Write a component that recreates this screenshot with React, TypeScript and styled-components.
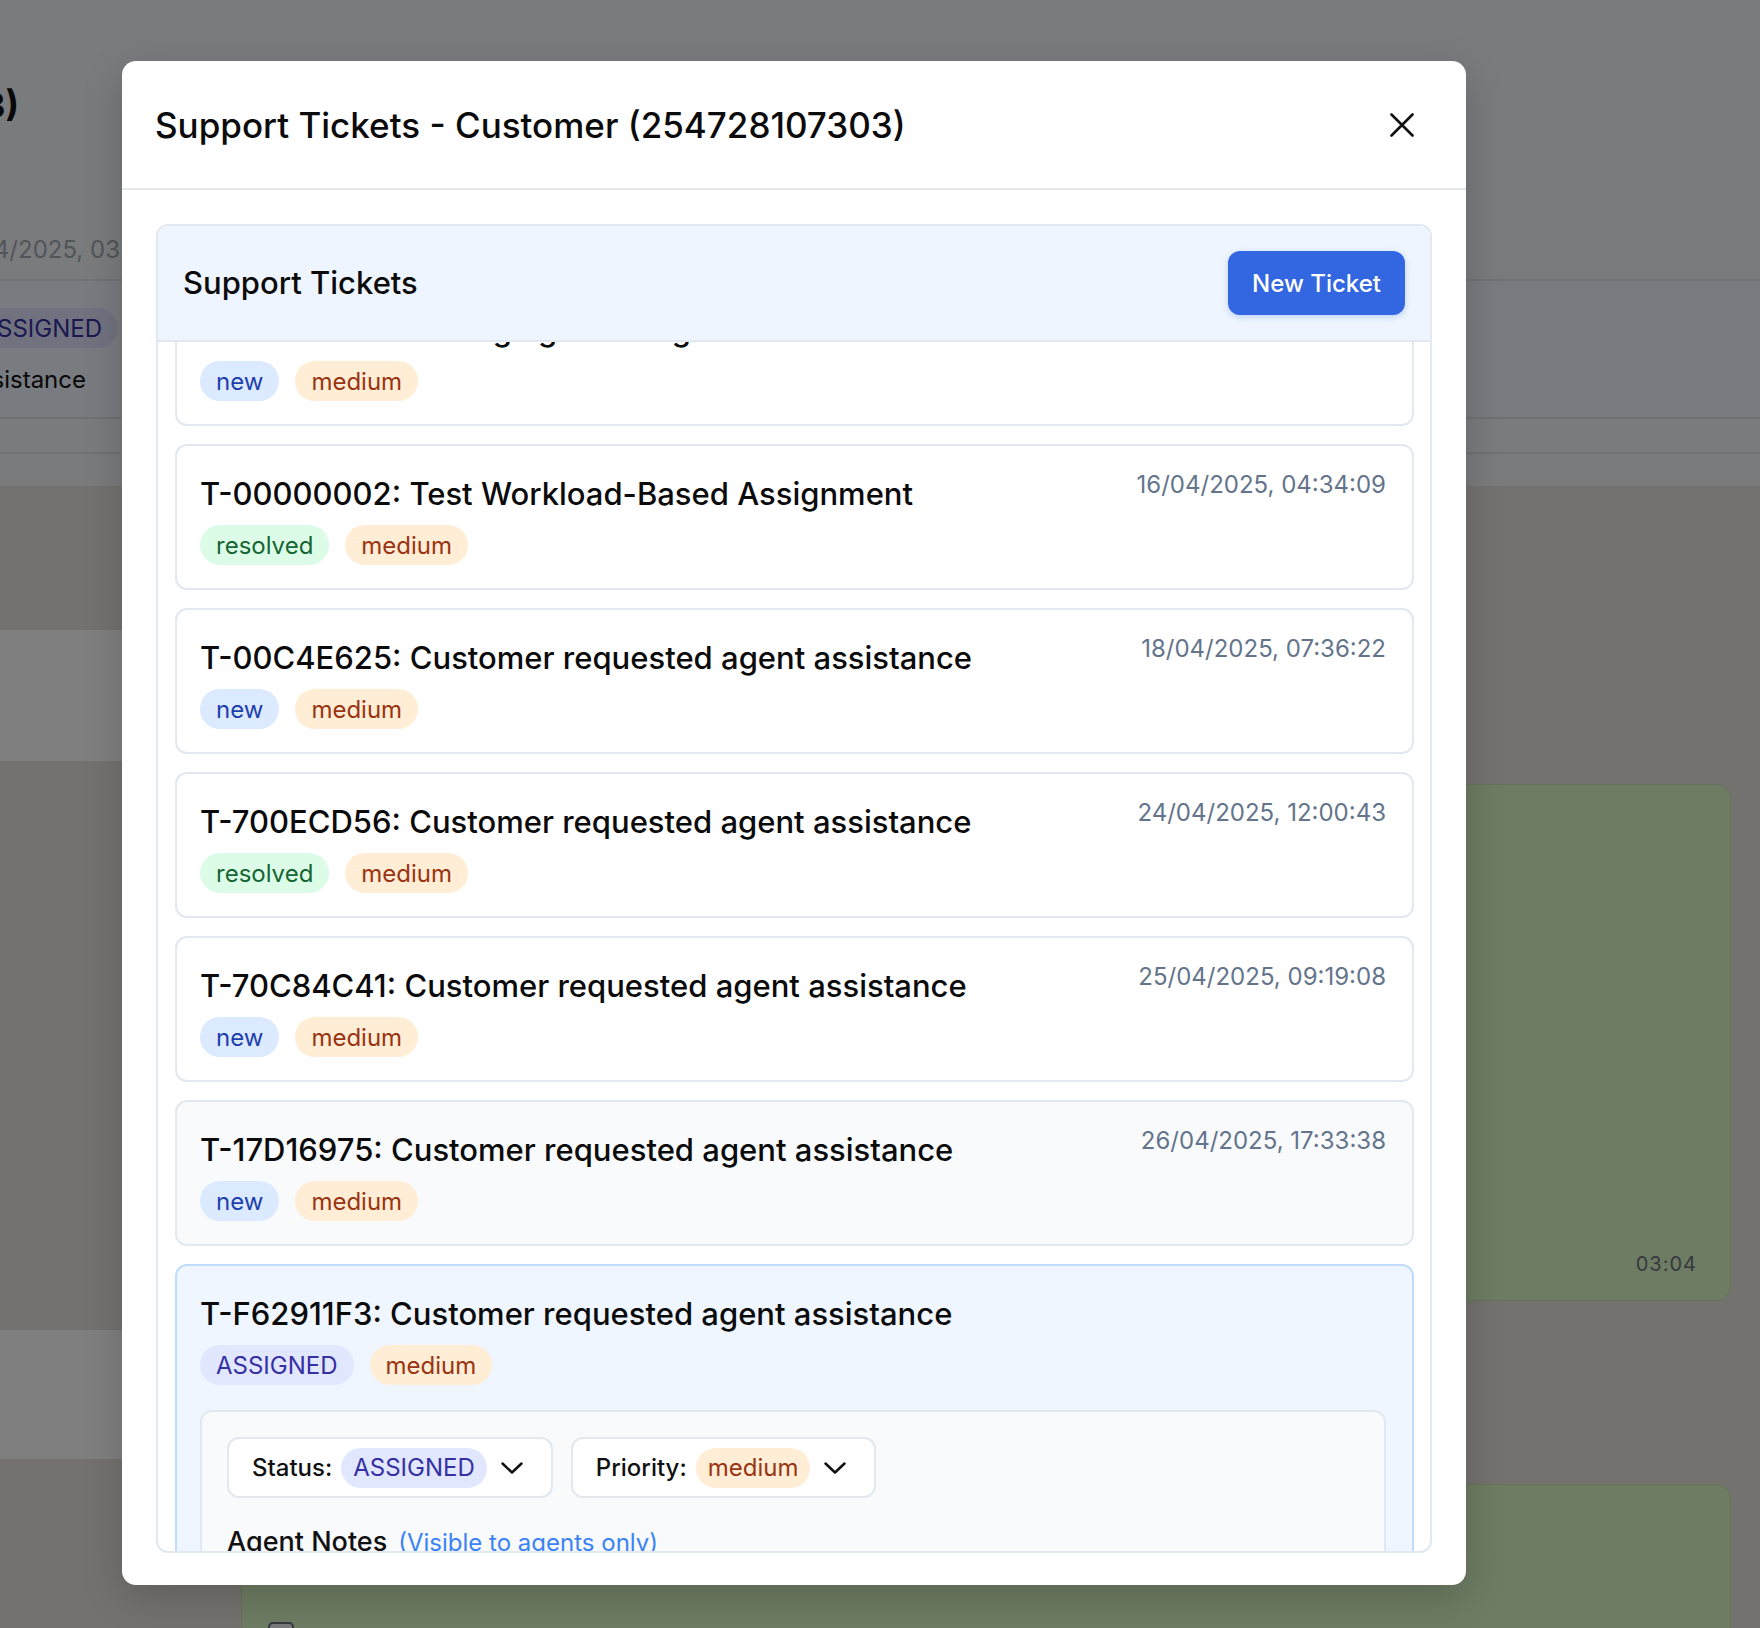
import { useLayoutEffect, useRef } from "react";
import styled, { createGlobalStyle } from "styled-components";

type Tone = "new" | "resolved" | "assigned" | "medium";
type Look = "plain" | "hover" | "open";

type Ticket = {
  id: string;
  title: string;
  date?: string;
  status: Tone;
  statusLabel: string;
  look: Look;
};

const tickets: Ticket[] = [
  {
    id: "T-00000001",
    title: "Testing agent assignment on ticket creation",
    date: "15/04/2025, 10:12:45",
    status: "new",
    statusLabel: "new",
    look: "plain",
  },
  {
    id: "T-00000002",
    title: "Test Workload-Based Assignment",
    date: "16/04/2025, 04:34:09",
    status: "resolved",
    statusLabel: "resolved",
    look: "plain",
  },
  {
    id: "T-00C4E625",
    title: "Customer requested agent assistance",
    date: "18/04/2025, 07:36:22",
    status: "new",
    statusLabel: "new",
    look: "plain",
  },
  {
    id: "T-700ECD56",
    title: "Customer requested agent assistance",
    date: "24/04/2025, 12:00:43",
    status: "resolved",
    statusLabel: "resolved",
    look: "plain",
  },
  {
    id: "T-70C84C41",
    title: "Customer requested agent assistance",
    date: "25/04/2025, 09:19:08",
    status: "new",
    statusLabel: "new",
    look: "plain",
  },
  {
    id: "T-17D16975",
    title: "Customer requested agent assistance",
    date: "26/04/2025, 17:33:38",
    status: "new",
    statusLabel: "new",
    look: "hover",
  },
  {
    id: "T-F62911F3",
    title: "Customer requested agent assistance",
    status: "assigned",
    statusLabel: "ASSIGNED",
    look: "open",
  },
];

const tones: Record<Tone, { bg: string; fg: string }> = {
  new: { bg: "#dbeafe", fg: "#1e40af" },
  resolved: { bg: "#dcfce7", fg: "#166534" },
  assigned: { bg: "#e0e7ff", fg: "#3730a3" },
  medium: { bg: "#ffedd5", fg: "#9a3412" },
};

const looks: Record<Look, { bg: string; border: string }> = {
  plain: { bg: "#ffffff", border: "#e2e8f0" },
  hover: { bg: "#f8fafc", border: "#e2e8f0" },
  open: { bg: "#eff6ff", border: "#bfdbfe" },
};

const GlobalStyle = createGlobalStyle`
  html, body {
    margin: 0;
    padding: 0;
  }
  body {
    font-family: Inter, "Noto Sans", "Liberation Sans", sans-serif;
    color: #111827;
    -webkit-font-smoothing: antialiased;
  }
  * {
    box-sizing: border-box;
  }
`;

/* ---------- page behind the modal ---------- */

const Page = styled.div`
  position: relative;
  width: 1760px;
  height: 1628px;
  overflow: hidden;
  background: #f4f6fa;
  display: flex;
  flex-direction: column;
`;

const ChatHeader = styled.header`
  height: 281px;
  flex-shrink: 0;
  padding-top: 83px;
  border-bottom: 2px solid #dde3ea;
  display: flex;
  flex-direction: column;
  gap: 107px;
`;

const ClipLine = styled.div<{ $end: number }>`
  width: ${(p) => p.$end}px;
  display: flex;
  justify-content: flex-end;
  align-items: center;
  overflow: hidden;
  white-space: nowrap;
`;

const PageTitle = styled.h1`
  margin: 0;
  font-size: 36px;
  line-height: 44px;
  font-weight: 700;
  color: #111;
`;

const PageDate = styled.span`
  font-size: 24px;
  line-height: 32px;
  color: #a3aab5;
`;

const TicketStrip = styled.div`
  height: 138px;
  flex-shrink: 0;
  background: #f0f6ff;
  border-bottom: 2px solid #dde3ea;
  padding-top: 27px;
  display: flex;
  flex-direction: column;
  gap: 16px;
`;

const StripText = styled.span`
  font-size: 24px;
  line-height: 32px;
  color: #111;
`;

const ThinStrip = styled.div`
  height: 35px;
  flex-shrink: 0;
  border-bottom: 2px solid #dde3ea;
`;

const Spacer = styled.div`
  height: 32px;
  flex-shrink: 0;
`;

const Chat = styled.main`
  flex: 1;
  background: #e6e4dc;
  display: flex;
  flex-direction: column;
  padding: 144px 29px 0 0;
`;

const InBubble = styled.div<{ $h: number; $gap: number }>`
  width: 800px;
  height: ${(p) => p.$h}px;
  margin-top: ${(p) => p.$gap}px;
  background: #ffffff;
  border-radius: 0 12px 12px 0;
  flex-shrink: 0;
`;

const OutBubble = styled.div<{ $w: number; $h: number; $gap: number }>`
  align-self: flex-end;
  width: ${(p) => p.$w}px;
  height: ${(p) => p.$h}px;
  margin-top: ${(p) => p.$gap}px;
  background: #dcf8c6;
  border: 1px solid #cde8b6;
  border-radius: 14px;
  flex-shrink: 0;
  display: flex;
  flex-direction: column;
`;

const BubbleTime = styled.span`
  margin-top: auto;
  align-self: flex-end;
  padding: 0 33px 22px 0;
  font-size: 20px;
  line-height: 28px;
  letter-spacing: 1px;
  color: #6b7280;
`;

const BubbleCheck = styled.span`
  margin: 137px 0 0 26px;
  width: 26px;
  height: 26px;
  border: 2px solid #6b7280;
  border-radius: 5px;
  background: #f3f4f6;
`;

/* ---------- modal ---------- */

const Overlay = styled.div`
  position: absolute;
  inset: 0;
  background: rgba(0, 0, 0, 0.5);
  display: flex;
  align-items: flex-start;
  padding: 61px 0 0 122px;
`;

const Modal = styled.div`
  width: 1344px;
  height: 1524px;
  background: #ffffff;
  border-radius: 14px;
  box-shadow: 0 12px 40px rgba(0, 0, 0, 0.18);
  display: flex;
  flex-direction: column;
  overflow: hidden;
`;

const ModalHeader = styled.div`
  height: 129px;
  flex-shrink: 0;
  border-bottom: 2px solid #e5e7eb;
  display: flex;
  align-items: center;
  justify-content: space-between;
  padding: 0 46px 0 33px;
`;

const ModalTitle = styled.h2`
  margin: 0;
  font-size: 35px;
  line-height: 46px;
  font-weight: 500;
  color: #0b0b0c;
`;

const CloseButton = styled.button`
  width: 36px;
  height: 36px;
  border: none;
  background: none;
  padding: 0;
  display: flex;
  align-items: center;
  justify-content: center;
  color: #111;
  cursor: pointer;
`;

const ModalBody = styled.div`
  flex: 1;
  min-height: 0;
  padding: 34px 34px 32px;
  display: flex;
  flex-direction: column;
`;

const Panel = styled.section`
  flex: 1;
  min-height: 0;
  border: 2px solid #e2e8f0;
  border-radius: 12px;
  overflow: hidden;
  display: flex;
  flex-direction: column;
`;

const PanelScroll = styled.div`
  flex: 1;
  min-height: 0;
  overflow-y: auto;
  scrollbar-width: none;
  &::-webkit-scrollbar {
    display: none;
  }
`;

const PanelHeader = styled.div`
  position: sticky;
  top: 0;
  z-index: 2;
  height: 116px;
  background: #eef5fe;
  border-bottom: 2px solid #e2e8f0;
  display: flex;
  align-items: center;
  justify-content: space-between;
  padding: 0 25px 0 25px;
`;

const PanelTitle = styled.h3`
  margin: 0;
  font-size: 31px;
  line-height: 40px;
  font-weight: 500;
  color: #0b0b0c;
`;

const NewButton = styled.button`
  width: 177px;
  height: 64px;
  border: none;
  border-radius: 12px;
  background: #3366e1;
  color: #ffffff;
  font-family: inherit;
  font-size: 24px;
  font-weight: 500;
  box-shadow: 0 2px 6px rgba(37, 99, 235, 0.25);
  cursor: pointer;
`;

const TicketList = styled.div`
  display: flex;
  flex-direction: column;
  gap: 18px;
  padding: 18px 16px 18px 17px;
`;

const Card = styled.article<{ $look: Look }>`
  border: 2px solid ${(p) => looks[p.$look].border};
  background: ${(p) => looks[p.$look].bg};
  border-radius: 12px;
  padding: 25px 26px 23px 23px;
  display: flex;
  flex-direction: column;
`;

const CardTop = styled.div`
  display: flex;
  justify-content: space-between;
  align-items: flex-start;
  gap: 24px;
`;

const CardTitle = styled.h4`
  margin: 0;
  font-size: 31px;
  line-height: 46px;
  font-weight: 500;
  color: #0b0b0c;
`;

const CardDate = styled.span`
  font-size: 24px;
  line-height: 28px;
  color: #64748b;
  white-space: nowrap;
`;

const BadgeRow = styled.div`
  display: flex;
  gap: 16px;
  margin-top: 8px;
`;

const Badge = styled.span<{ $tone: Tone; $compact?: boolean }>`
  display: inline-flex;
  align-items: center;
  height: 40px;
  padding: 0 ${(p) => (p.$compact ? 12 : 16)}px;
  border-radius: 999px;
  font-size: 24px;
  font-weight: 400;
  background: ${(p) => tones[p.$tone].bg};
  color: ${(p) => tones[p.$tone].fg};
`;

const Details = styled.div`
  margin-top: 25px;
  background: #f8fafc;
  border: 2px solid #e2e8f0;
  border-radius: 12px;
  padding: 25px 25px 40px;
`;

const SelectRow = styled.div`
  display: flex;
  gap: 18px;
`;

const Select = styled.div`
  height: 61px;
  display: flex;
  align-items: center;
  gap: 9px;
  padding: 0 28px 0 23px;
  background: #ffffff;
  border: 2px solid #e2e8f0;
  border-radius: 12px;
  font-size: 24px;
  font-weight: 500;
  color: #111;
`;

const Chevron = styled.svg`
  margin-left: 5px;
`;

const NotesLabel = styled.div`
  margin-top: 26px;
  font-size: 27px;
  line-height: 36px;
  font-weight: 500;
  color: #111;
`;

const NotesHint = styled.span`
  font-size: 24px;
  font-weight: 400;
  color: #3b82f6;
  margin-left: 11px;
`;

const NotesBox = styled.div`
  margin-top: 12px;
  height: 160px;
  background: #ffffff;
  border: 2px solid #e2e8f0;
  border-radius: 12px;
`;

function ChevronIcon() {
  return (
    <Chevron width="22" height="12" viewBox="0 0 22 12" fill="none">
      <polyline
        points="1.5,1.5 11,10.5 20.5,1.5"
        stroke="#111"
        strokeWidth="2.5"
        strokeLinecap="round"
        strokeLinejoin="round"
      />
    </Chevron>
  );
}

function TicketCard({ t }: { t: Ticket }) {
  return (
    <Card $look={t.look}>
      <CardTop>
        <CardTitle>
          {t.id}: {t.title}
        </CardTitle>
        {t.date && <CardDate>{t.date}</CardDate>}
      </CardTop>
      <BadgeRow>
        <Badge $tone={t.status}>{t.statusLabel}</Badge>
        <Badge $tone="medium">medium</Badge>
      </BadgeRow>
      {t.look === "open" && (
        <Details>
          <SelectRow>
            <Select>
              Status:
              <Badge $tone="assigned" $compact>
                ASSIGNED
              </Badge>
              <ChevronIcon />
            </Select>
            <Select>
              Priority:
              <Badge $tone="medium" $compact>
                medium
              </Badge>
              <ChevronIcon />
            </Select>
          </SelectRow>
          <NotesLabel>
            Agent Notes<NotesHint>(Visible to agents only)</NotesHint>
          </NotesLabel>
          <NotesBox />
        </Details>
      )}
    </Card>
  );
}

export default function App() {
  const scrollRef = useRef<HTMLDivElement>(null);

  useLayoutEffect(() => {
    if (scrollRef.current) scrollRef.current.scrollTop = 80;
  }, []);

  return (
    <>
      <GlobalStyle />
      <Page>
        <ChatHeader>
          <ClipLine $end={19}>
            <PageTitle>Customer (254728107303)</PageTitle>
          </ClipLine>
          <ClipLine $end={120}>
            <PageDate>Created: 26/04/2025, 03</PageDate>
          </ClipLine>
        </ChatHeader>
        <TicketStrip>
          <ClipLine $end={118}>
            <Badge $tone="assigned">ASSIGNED</Badge>
          </ClipLine>
          <ClipLine $end={86}>
            <StripText>Customer requested agent assistance</StripText>
          </ClipLine>
        </TicketStrip>
        <ThinStrip />
        <Spacer />
        <Chat>
          <InBubble $h={131} $gap={0} />
          <OutBubble $w={1100} $h={517} $gap={23}>
            <BubbleTime>03:04</BubbleTime>
          </OutBubble>
          <InBubble $h={129} $gap={29} />
          <OutBubble $w={1490} $h={300} $gap={25}>
            <BubbleCheck />
          </OutBubble>
        </Chat>

        <Overlay>
          <Modal>
            <ModalHeader>
              <ModalTitle>Support Tickets - Customer (254728107303)</ModalTitle>
              <CloseButton aria-label="Close">
                <svg width="24" height="24" viewBox="0 0 24 24" fill="none">
                  <path
                    d="M1.5 1.5 22.5 22.5M22.5 1.5 1.5 22.5"
                    stroke="currentColor"
                    strokeWidth="2.6"
                    strokeLinecap="round"
                  />
                </svg>
              </CloseButton>
            </ModalHeader>
            <ModalBody>
              <Panel>
                <PanelScroll ref={scrollRef}>
                  <PanelHeader>
                    <PanelTitle>Support Tickets</PanelTitle>
                    <NewButton>New Ticket</NewButton>
                  </PanelHeader>
                  <TicketList>
                    {tickets.map((t) => (
                      <TicketCard key={t.id} t={t} />
                    ))}
                  </TicketList>
                </PanelScroll>
              </Panel>
            </ModalBody>
          </Modal>
        </Overlay>
      </Page>
    </>
  );
}
